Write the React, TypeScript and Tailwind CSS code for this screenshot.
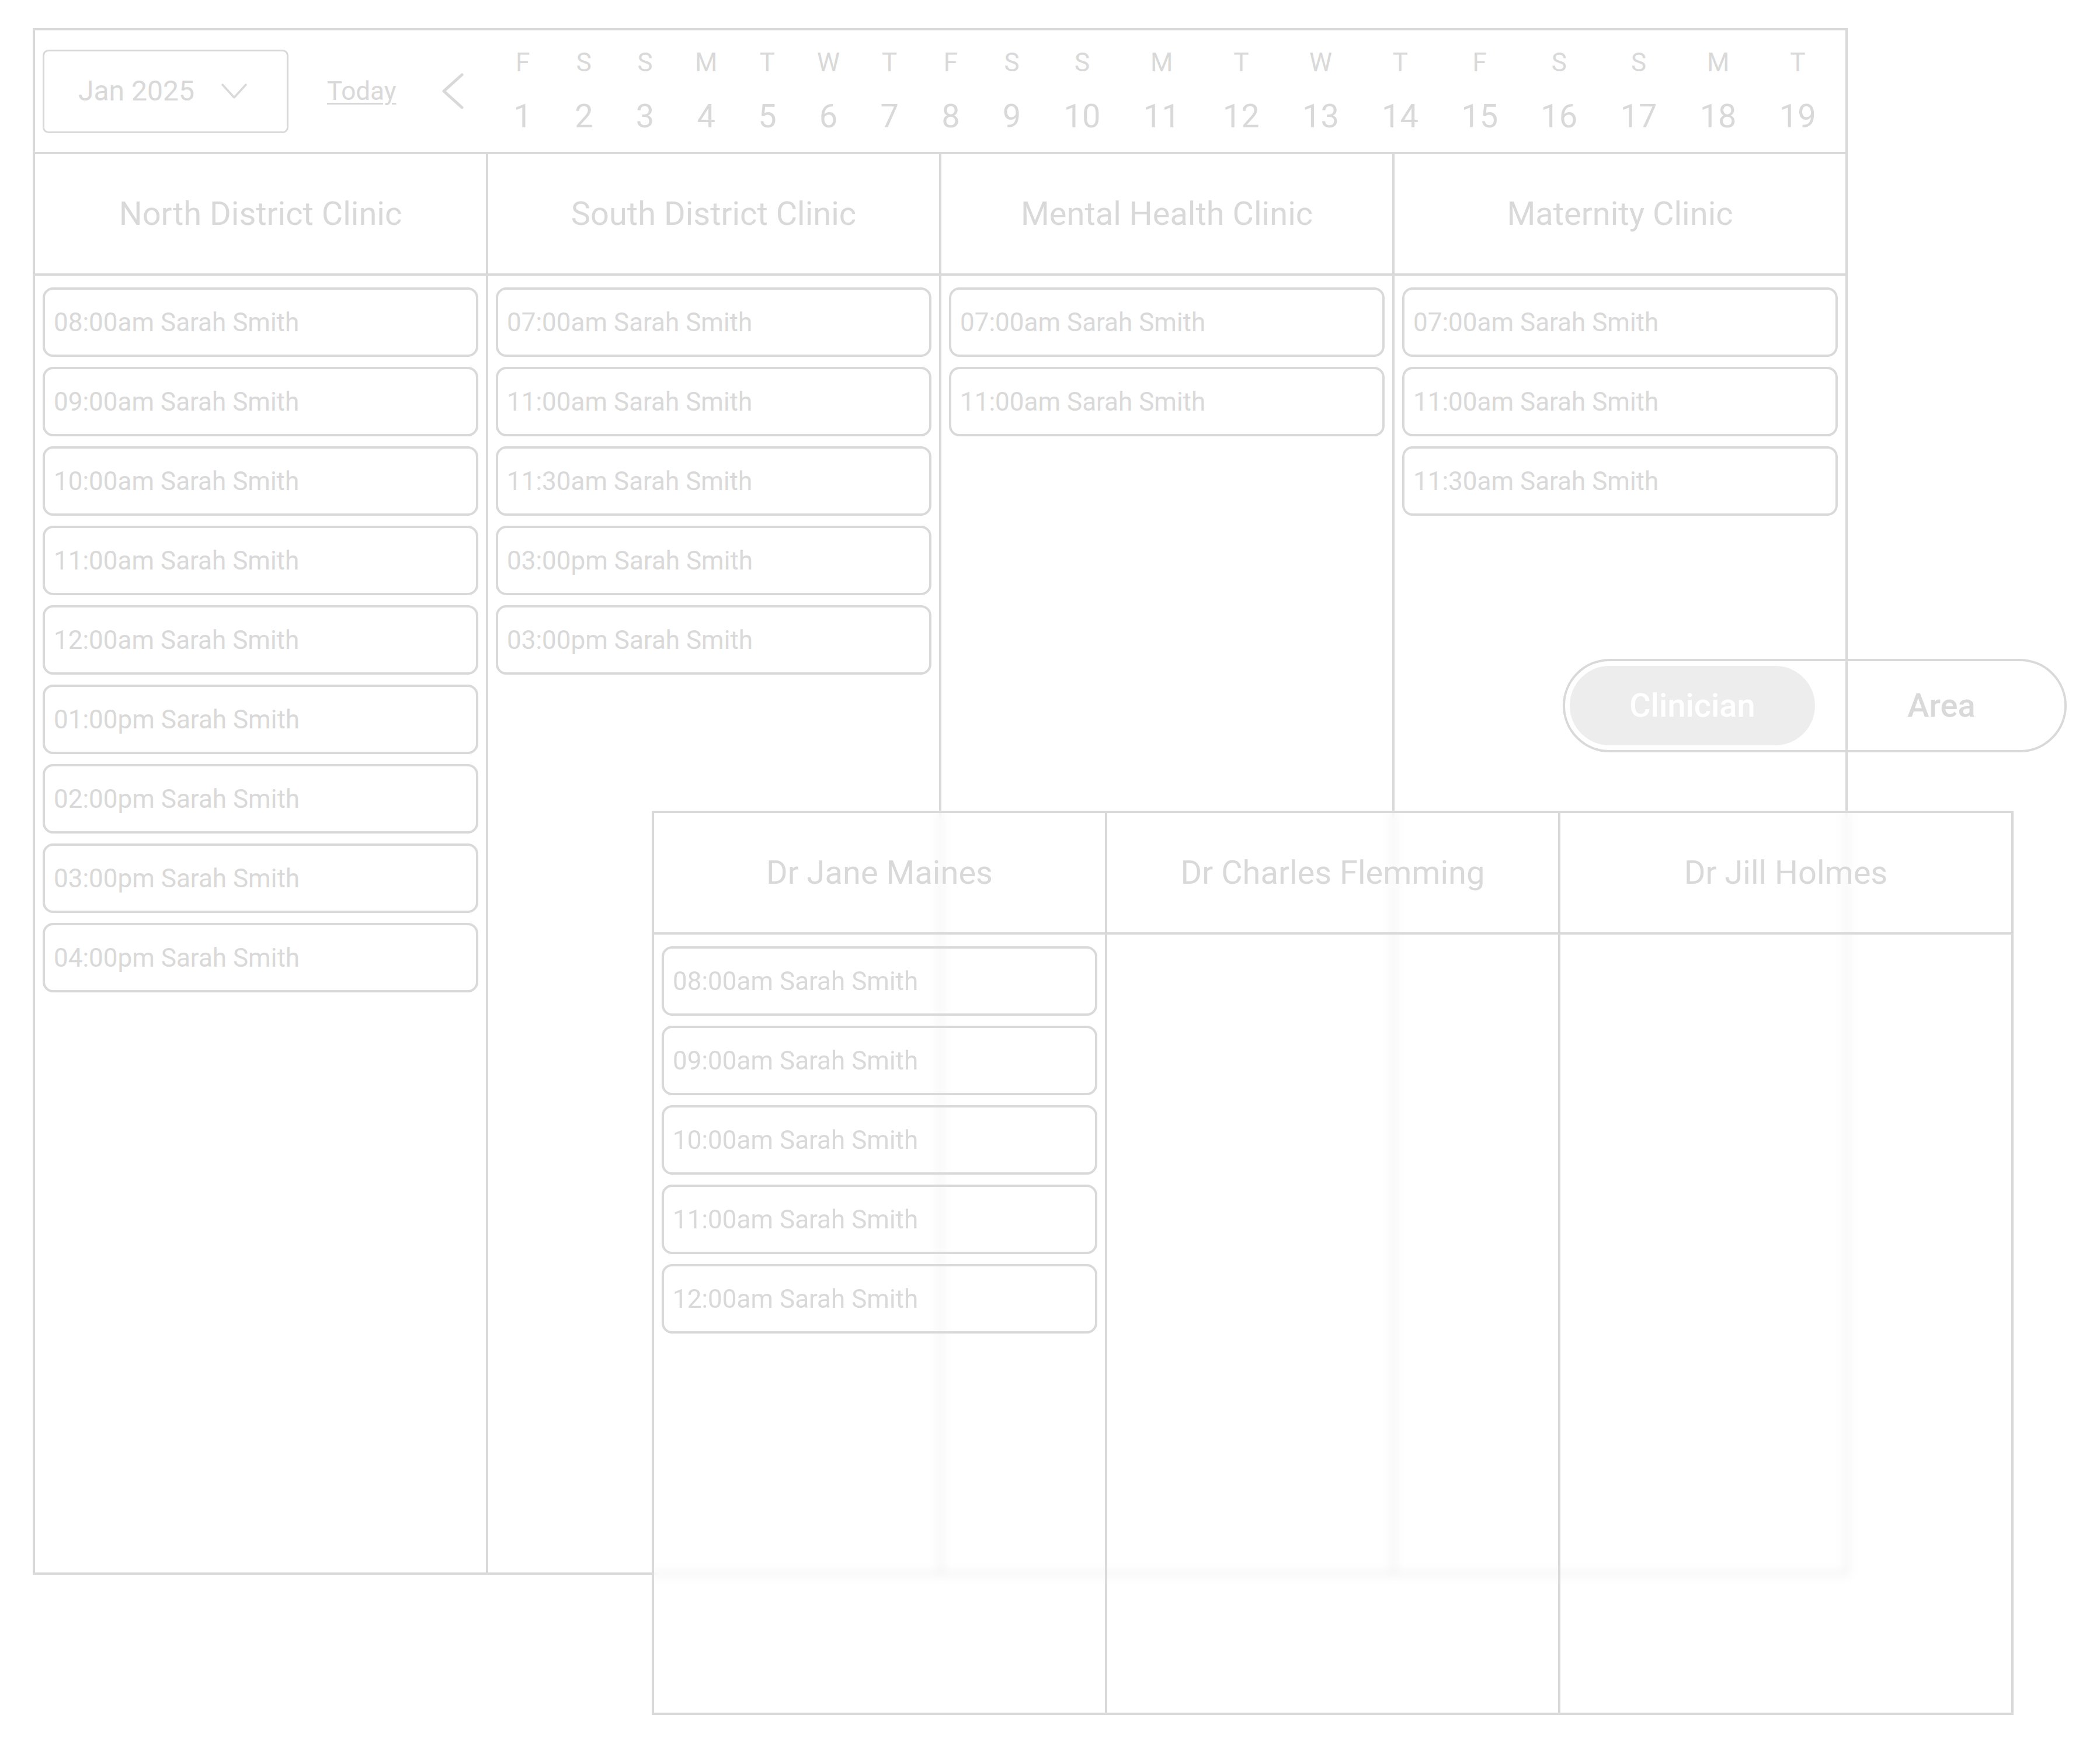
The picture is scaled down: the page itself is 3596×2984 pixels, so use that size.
import React from "react";

const DAYS = "FSSMTWTFSSMTWTFSSMT".split("");

type ColData = { title: string; items: string[] };

const AREA_COLS: ColData[] = [
  {
    title: "North District Clinic",
    items: ["08:00am", "09:00am", "10:00am", "11:00am", "12:00am", "01:00pm", "02:00pm", "03:00pm", "04:00pm"],
  },
  { title: "South District Clinic", items: ["07:00am", "11:00am", "11:30am", "03:00pm", "03:00pm"] },
  { title: "Mental Health Clinic", items: ["07:00am", "11:00am"] },
  { title: "Maternity Clinic", items: ["07:00am", "11:00am", "11:30am"] },
];

const CLIN_COLS: ColData[] = [
  { title: "Dr Jane Maines", items: ["08:00am", "09:00am", "10:00am", "11:00am", "12:00am"] },
  { title: "Dr Charles Flemming", items: [] },
  { title: "Dr Jill Holmes", items: [] },
];

function Card({ time }: { time: string }) {
  return (
    <div className="h-[119px] shrink-0 rounded-[18px] border-4 border-[#d9d9d9] flex items-center pl-[15px] text-[44px] leading-none text-[#d9d9d9] whitespace-nowrap">
      {time} Sarah Smith
    </div>
  );
}

function HeaderRow({ cols }: { cols: ColData[] }) {
  return (
    <div className="flex h-[208px] shrink-0 border-b-4 border-[#d9d9d9]">
      {cols.map((c, i) => (
        <div
          key={c.title}
          className={
            i === 0
              ? "w-[772px] shrink-0 flex items-center justify-center text-[56px] leading-none text-[#d9d9d9] whitespace-nowrap"
              : "w-[776px] shrink-0 border-l-4 border-[#d9d9d9] flex items-center justify-center text-[56px] leading-none text-[#d9d9d9] whitespace-nowrap"
          }
        >
          {c.title}
        </div>
      ))}
    </div>
  );
}

function BodyRow({ cols }: { cols: ColData[] }) {
  return (
    <div className="flex flex-1">
      {cols.map((c, i) => (
        <div
          key={c.title}
          className={
            i === 0
              ? "w-[772px] shrink-0 flex flex-col gap-[17px] px-[13px] pt-[20px]"
              : "w-[776px] shrink-0 border-l-4 border-[#d9d9d9] flex flex-col gap-[17px] px-[13px] pt-[20px]"
          }
        >
          {c.items.map((t, j) => (
            <Card key={j} time={t} />
          ))}
        </div>
      ))}
    </div>
  );
}

function DateHeader() {
  return (
    <div className="h-[212px] shrink-0 flex items-center pl-[13px] border-b-4 border-[#d9d9d9] text-[#d9d9d9]">
      <div className="w-[421px] h-[143px] shrink-0 border-[3px] border-[#d9d9d9] rounded-[10px] flex items-center pl-[58px]">
        <span className="text-[48px] leading-none whitespace-nowrap">Jan 2025</span>
        <svg className="ml-[46px] overflow-visible" width="44" height="26" viewBox="0 0 44 26">
          <polyline
            points="2,2 22,24 42,2"
            fill="none"
            stroke="#d9d9d9"
            strokeWidth="3.5"
            strokeLinecap="round"
            strokeLinejoin="round"
          />
        </svg>
      </div>
      <span className="ml-[66px] text-[44px] leading-none underline underline-offset-[5px] decoration-[3px]">Today</span>
      <svg className="ml-[78px] overflow-visible" width="40" height="62" viewBox="0 0 40 62">
        <polyline
          points="35,3 4,31 35,59"
          fill="none"
          stroke="#d9d9d9"
          strokeWidth="5"
          strokeLinecap="round"
          strokeLinejoin="round"
        />
      </svg>
      <div className="ml-[83px] flex gap-[73.2px]">
        {DAYS.map((d, i) => (
          <div key={i} className="flex flex-col items-center">
            <div className="w-0 h-[44px] flex justify-center">
              <span className="text-[44px] leading-[44px]">{d}</span>
            </div>
            <span className="mt-[42px] text-[56px] leading-[56px]">{i + 1}</span>
          </div>
        ))}
      </div>
    </div>
  );
}

export default function App() {
  return (
    <div className="relative w-[3596px] h-[2984px] overflow-hidden bg-white font-['Roboto',sans-serif] text-[#d9d9d9]">
      {/* Area view calendar */}
      <div className="ml-[56px] pt-[48px]">
        <div className="w-[3108px] h-[2648px] border-4 border-[#d9d9d9] flex flex-col">
          <DateHeader />
          <HeaderRow cols={AREA_COLS} />
          <BodyRow cols={AREA_COLS} />
        </div>
      </div>

      {/* View toggle */}
      <div className="absolute left-[2676px] top-[1128px] w-[863px] h-[160px] rounded-full border-4 border-[#d9d9d9] p-[8px] flex">
        <div className="w-[420px] h-full rounded-full bg-[#eeeded] flex items-center justify-center text-[56px] leading-none font-medium text-white">
          Clinician
        </div>
        <div className="flex-1 flex items-center justify-center pl-[14px] text-[56px] leading-none font-medium text-[#d9d9d9]">
          Area
        </div>
      </div>

      {/* Clinician view calendar overlay */}
      <div className="absolute left-[1116px] top-[1388px] w-[2332px] h-[1548px] border-4 border-[#d9d9d9] bg-white/40 backdrop-blur-[8px] flex flex-col">
        <HeaderRow cols={CLIN_COLS} />
        <BodyRow cols={CLIN_COLS} />
      </div>
    </div>
  );
}
